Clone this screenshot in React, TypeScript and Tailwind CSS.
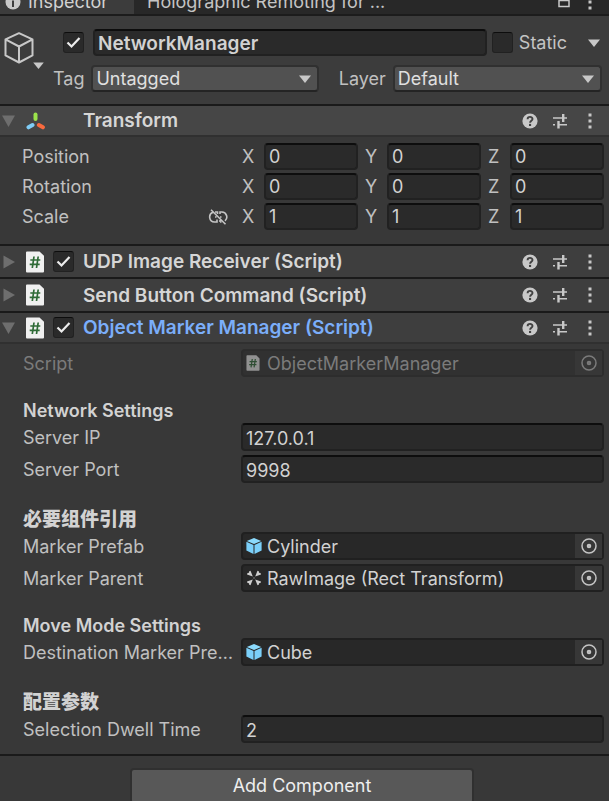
import { useId, useState, type ReactNode } from "react";

const FIELD =
  "min-w-0 rounded border-2 border-[#212121] border-t-[#0d0d0d] bg-[#2a2a2a] px-[3px] text-[#d2d2d2] outline-none focus:border-[#3a79bb]";

function Triangle({ className }: { className: string }) {
  return (
    <svg viewBox="0 0 12 8" className={className} fill="currentColor" aria-hidden="true">
      <path d="M0 0.500h12L6 8z" />
    </svg>
  );
}

function Check({ label, checked = false }: { label: string; checked?: boolean }) {
  return (
    <span className="grid h-[21px] w-[21px] shrink-0">
      <input
        type="checkbox"
        aria-label={label}
        defaultChecked={checked}
        className="peer h-full w-full appearance-none rounded-[3px] border border-[#212121] border-t-[#0d0d0d] bg-[#2a2a2a] [grid-area:1/1]"
      />
      <svg
        viewBox="0 0 21 21"
        className="pointer-events-none invisible h-full w-full [grid-area:1/1] peer-checked:visible"
        fill="none"
        stroke="#ececec"
        strokeWidth="2.2"
        aria-hidden="true"
      >
        <path d="M4.500 10.500l4 4 8-8.500" />
      </svg>
    </span>
  );
}

function Dropdown({ label, options, className }: { label: string; options: string[]; className: string }) {
  const id = useId();
  return (
    <>
      <label htmlFor={id} className="pt-px text-[#c0c0c0]">
        {label}
      </label>
      <span className={`grid items-center ${className}`}>
        <select
          id={id}
          className="h-[27px] w-full appearance-none rounded border-2 border-[#303030] border-b-[#242424] bg-[#515151] pt-px pr-6 pl-[3px] leading-[22px] text-[#e0e0e0] outline-none [grid-area:1/1]"
        >
          {options.map((o) => (
            <option key={o}>{o}</option>
          ))}
        </select>
        <Triangle className="pointer-events-none mr-2 h-2 w-3 justify-self-end text-[#c8c8c8] [grid-area:1/1]" />
      </span>
    </>
  );
}

function Kebab() {
  return (
    <svg viewBox="0 0 4 16" className="h-4 w-1" fill="#c8c8c8" aria-hidden="true">
      <path d="M.5.5h3v3h-3zM.5 6.5h3v3h-3zM.5 12.5h3v3h-3z" />
    </svg>
  );
}

function HeaderTools({ name }: { name: string }) {
  return (
    <div className="ml-auto flex shrink-0 items-center pr-[17px]">
      <button aria-label={`${name} help`} className="mr-[14px]">
        <svg viewBox="0 0 16 16" className="h-4 w-4" aria-hidden="true">
          <circle cx="8" cy="8" r="7.6" fill="#c8c8c8" />
          <path d="M5.6 6.2c0-3 4.9-3 4.9-.2 0 1.9-2.4 1.8-2.4 3.8" fill="none" stroke="#404040" strokeWidth="1.9" />
          <rect x="7" y="10.9" width="2.1" height="2.1" fill="#404040" />
        </svg>
      </button>
      <button aria-label={`${name} presets`} className="mr-5">
        <svg viewBox="0 0 16 16" className="h-4 w-4" fill="#c8c8c8" aria-hidden="true">
          <path d="M1 4.2h9v1.6H1zM10 1h2.400v8H10zM12 4.200h3v1.600h-3zM1 11h2v1.600H1zM5.300 8h2.400v7.400H5.300zM7.500 11h7.500v1.600H7.500z" />
        </svg>
      </button>
      <button aria-label={`${name} menu`}>
        <Kebab />
      </button>
    </div>
  );
}

function ScriptIcon({ small = false }: { small?: boolean }) {
  return (
    <svg viewBox="0 0 18 22" className={small ? "h-4 w-[14px] shrink-0 opacity-50" : "h-[22px] w-[18px] shrink-0"} aria-hidden="true">
      <path d="M1 .5h12.5L18 4.800V20.500a1 1 0 0 1-1 1H1a1 1 0 0 1-1-1v-19a1 1 0 0 1 1-1z" fill="#f0f0f0" />
      <path d="M8 5.500L6.300 17M12.200 5.500L10.500 17M4.300 9h10M3.700 13.300h10" fill="none" stroke="#2f6b37" strokeWidth="1.700" />
    </svg>
  );
}

function TransformIcon() {
  return (
    <svg viewBox="0 0 20 18" className="h-[18px] w-5" fill="none" strokeWidth="4" strokeLinecap="round" aria-hidden="true">
      <path d="M9.500 2.500v4.500" stroke="#9be34b" />
      <path d="M2.500 15.300l4-2.300" stroke="#7fcdf7" />
      <path d="M12.900 13l4 2.300" stroke="#f96a3e" />
    </svg>
  );
}

function PrefabIcon() {
  return (
    <svg viewBox="0 0 16 16" className="h-4 w-4 shrink-0" aria-hidden="true">
      <path d="M8 0l7.200 2.900L8 6 .8 2.900z" fill="#8bdafc" />
      <path d="M.4 3.800L7.500 7v9L.4 12.600z" fill="#7bd0fa" />
      <path d="M15.600 3.800L8.500 7v9l7.100-3.400z" fill="#7bd0fa" />
    </svg>
  );
}

function RectIcon() {
  return (
    <svg viewBox="0 0 16 16" className="h-4 w-4 shrink-0" fill="#cfcfcf" aria-hidden="true">
      <path d="M4.500 .8L6.800 6.500 1 4.400 1.500 3 3 2.800 3.200 1.200zM11.500 .8L9.200 6.500 15 4.400 14.500 3 13 2.800 12.800 1.200zM4.500 15.200L6.800 9.500 1 11.600 1.500 13l1.500.2.200 1.600zM11.500 15.200L9.200 9.500 15 11.600l-.5 1.400-1.500.2-.2 1.600z" />
      <path d="M7.500 7.500h1v1h-1z" />
    </svg>
  );
}

type ComponentProps = {
  name: string;
  icon: ReactNode;
  checkbox?: boolean;
  open?: boolean;
  highlight?: boolean;
  height: string;
  shade?: string;
  children?: ReactNode;
};

function Component({ name, icon, checkbox, open: initial = false, highlight, height, shade = "bg-[#3e3e3e]", children }: ComponentProps) {
  const [open, setOpen] = useState(initial);
  return (
    <section className="border-t-2 border-[#1a1a1a]">
      <header className={`flex items-center ${height} ${shade} ${children ? "border-b-2 border-[#303030]" : ""}`}>
        <button aria-label={`Toggle ${name}`} aria-expanded={open} onClick={() => setOpen(!open)} className="flex w-[26px] shrink-0 pl-[2px]">
          <svg viewBox="0 0 14 14" className="h-[14px] w-[14px]" fill="#6e6e6e" aria-hidden="true">
            <path d={open ? "M0 1.500h13L6.500 13z" : "M1.500 .5v13L13 7z"} />
          </svg>
        </button>
        <span className="flex w-[27px] shrink-0">{icon}</span>
        <span className="flex w-[30px] shrink-0">{checkbox && <Check label={`Enable ${name}`} checked />}</span>
        <h2 className={`truncate pt-px text-[19px] font-semibold ${highlight ? "text-[#7baefa]" : "text-[#d6d6d6]"}`}>{name}</h2>
        <HeaderTools name={name} />
      </header>
      {open && children}
    </section>
  );
}

function VectorRow({ label, value, linkIcon }: { label: string; value: string; linkIcon?: boolean }) {
  return (
    <div className="flex h-[27px] items-center text-[#c0c0c0]">
      <span className="w-[186px] shrink-0">{label}</span>
      <span className="w-[34px] shrink-0">
        {linkIcon && (
          <button aria-label="Constrain proportions" className="flex">
            <svg viewBox="0 0 20 16" className="h-4 w-5" fill="none" stroke="#c4c4c4" strokeWidth="1.600" aria-hidden="true">
              <path d="M5 3.300a5 5 0 0 0 1.500 9.700H9v-2.500M7 3h2.500v2M12 5V3h2a5 5 0 0 1 3 8.800M12 13v-2M12 13h1.500M7 8h1.500M12 8h1.500M3 .8l14.500 14.500" />
            </svg>
          </button>
        )}
      </span>
      <div className="grid flex-1 grid-cols-3 gap-[7px]">
        {["X", "Y", "Z"].map((axis) => (
          <label key={axis} className="flex items-center">
            <span className="w-[22px] shrink-0">{axis}</span>
            <input aria-label={`${label} ${axis}`} defaultValue={value} className={`h-[27px] w-full ${FIELD}`} />
          </label>
        ))}
      </div>
    </div>
  );
}

function Row({ label, value, icon, disabled = false }: { label: string; value: string; icon?: ReactNode; disabled?: boolean }) {
  const id = useId();
  return (
    <div className={`flex h-7 items-center ${disabled ? "text-[#7b7b7b]" : "text-[#c0c0c0]"}`}>
      <label htmlFor={id} className="w-[218px] shrink-0 truncate pt-px pr-1">
        {label}
      </label>
      {icon ? (
        <div className={`flex h-7 min-w-0 flex-1 items-center rounded border-2 pl-[3px] ${disabled ? "border-[#2d2d2d] bg-[#313131]" : "border-[#202020] bg-[#282828] text-[#d2d2d2]"}`}>
          <span className="flex w-[21px] shrink-0">{icon}</span>
          <input id={id} defaultValue={value} readOnly disabled={disabled} className="h-6 min-w-0 flex-1 bg-transparent pt-[2px] outline-none" />
          <button aria-label={`Pick ${label}`} disabled={disabled} className="grid h-6 w-[27px] shrink-0 place-items-center bg-[#373737]">
            <svg viewBox="0 0 16 16" className="h-4 w-4" fill="none" stroke={disabled ? "#7b7b7b" : "#c4c4c4"} aria-hidden="true">
              <circle cx="8" cy="8" r="7" strokeWidth="1.500" />
              <circle cx="8" cy="8" r="1.300" strokeWidth="2" />
            </svg>
          </button>
        </div>
      ) : (
        <input id={id} defaultValue={value} className={`h-7 flex-1 pt-[2px] ${FIELD}`} />
      )}
    </div>
  );
}

function Group({ title, children, cjk }: { title: string; children: ReactNode; cjk?: boolean }) {
  return (
    <section className={cjk ? "pt-6" : "pt-[21px]"}>
      <h3 className={`h-6 leading-[26px] text-[#d2d2d2] ${cjk ? "text-[19px] font-black" : "font-semibold"}`}>{title}</h3>
      <div className="flex flex-col gap-1 pt-px">{children}</div>
    </section>
  );
}

export default function App() {
  return (
    <main className="min-h-screen bg-[#383838] font-['Inter','Noto_Sans_CJK_SC',sans-serif] text-[18px] leading-6 text-[#c4c4c4]">
      <nav className="flex h-4 items-end overflow-hidden border-b-2 border-[#1c1c1c] bg-[#282828]">
        <button className="flex h-6 w-[134px] shrink-0 items-center gap-[7px] bg-[#3c3c3c] pl-[5px] text-[#d2d2d2]">
          <svg viewBox="0 0 16 16" className="h-4 w-4" aria-hidden="true">
            <circle cx="8" cy="8" r="7.500" fill="#c8c8c8" />
            <path d="M7 3h2v2H7zM7 6.500h2V13H7z" fill="#3c3c3c" />
          </svg>
          Inspector
        </button>
        <button className="h-6 truncate pl-[13px]">Holographic Remoting for ...</button>
        <div className="ml-auto flex h-6 shrink-0 items-center gap-[18px] pr-[17px]">
          <button aria-label="Lock inspector">
            <svg viewBox="0 0 12 16" className="h-4 w-3" fill="none" stroke="#c8c8c8" strokeWidth="1.500" aria-hidden="true">
              <path d="M1 6.500h10v6H1zM3 6.500V3a3 3 0 0 1 6 0" />
            </svg>
          </button>
          <button aria-label="Tab menu">
            <Kebab />
          </button>
        </div>
      </nav>

      <header className="flex h-[88px] bg-[#3c3c3c] pt-[13px]">
        <button aria-label="Object icon" className="flex w-[53px] shrink-0 items-start pt-[3px] pl-1">
          <svg viewBox="0 0 30 32" className="h-8 w-[30px]" fill="none" stroke="#c8c8c8" strokeWidth="2" strokeLinejoin="round" aria-hidden="true">
            <path d="M15 1.200l13.500 6.200v16L15 30.500 1.500 23.400v-16zM1.500 7.400L15 14.500l13.500-7.100M15 14.500v16" />
          </svg>
          <Triangle className="mt-[30px] -ml-px h-[7px] w-[11px] text-[#c8c8c8]" />
        </button>
        <div className="flex min-w-0 flex-1 flex-col gap-[9px]">
          <div className="flex h-[27px] items-center pl-[10px]">
            <Check label="Active" checked />
            <input aria-label="Object name" defaultValue="NetworkManager" className={`mr-[5px] ml-[9px] h-[27px] flex-1 pt-px text-[19px] font-semibold ${FIELD}`} />
            <label className="flex items-center gap-[6px]">
              <Check label="Static" />
              Static
            </label>
            <button aria-label="Static flags" className="ml-[21px] pr-[9px]">
              <Triangle className="h-2 w-3 text-[#c8c8c8]" />
            </button>
          </div>
          <div className="flex items-center gap-[7px] pr-[7px]">
            <Dropdown label="Tag" options={["Untagged", "Player"]} className="mr-[13px] flex-[225]" />
            <Dropdown label="Layer" options={["Default", "UI"]} className="flex-[207]" />
          </div>
        </div>
      </header>

      <Component name="Transform" icon={<TransformIcon />} open height="h-[31px]" shade="bg-[#464646]">
        <div className="flex flex-col gap-[3px] pt-[6px] pr-[5px] pb-[14px] pl-[22px]">
          <VectorRow label="Position" value="0" />
          <VectorRow label="Rotation" value="0" />
          <VectorRow label="Scale" value="1" linkIcon />
        </div>
      </Component>
      <Component name="UDP Image Receiver (Script)" icon={<ScriptIcon />} checkbox height="h-[31px]" />
      <Component name="Send Button Command (Script)" icon={<ScriptIcon />} height="h-8" />
      <Component name="Object Marker Manager (Script)" icon={<ScriptIcon />} checkbox open highlight height="h-[31px]">
        <div className="pt-[5px] pr-[5px] pb-[11px] pl-[23px]">
          <Row label="Script" value="ObjectMarkerManager" icon={<ScriptIcon small />} disabled />
          <Group title="Network Settings">
            <Row label="Server IP" value="127.0.0.1" />
            <Row label="Server Port" value="9998" />
          </Group>
          <Group title="必要组件引用" cjk>
            <Row label="Marker Prefab" value="Cylinder" icon={<PrefabIcon />} />
            <Row label="Marker Parent" value="RawImage (Rect Transform)" icon={<RectIcon />} />
          </Group>
          <Group title="Move Mode Settings">
            <Row label="Destination Marker Prefab" value="Cube" icon={<PrefabIcon />} />
          </Group>
          <Group title="配置参数" cjk>
            <Row label="Selection Dwell Time" value="2" />
          </Group>
        </div>
      </Component>

      <footer className="flex h-[47px] items-start justify-center overflow-hidden border-t-2 border-[#1a1a1a] pt-3 pr-[5px]">
        <button className="h-9 w-[344px] shrink-0 rounded border-2 border-[#303030] bg-[#585858] text-[#eeeeee]">Add Component</button>
      </footer>
    </main>
  );
}
